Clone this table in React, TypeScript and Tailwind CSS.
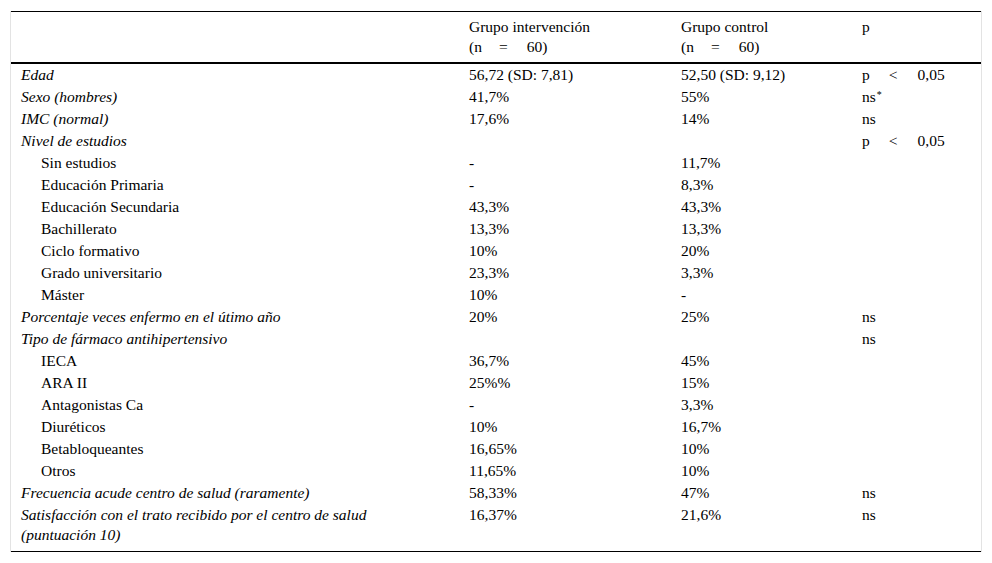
import React from "react";

type Row = { label: string; kind: "cat" | "sub"; a?: string; b?: string; p?: React.ReactNode };

const PLess = () => (
  <span>
    p<span className="ml-[19px]">&lt;</span>
    <span className="ml-[20px]">0,05</span>
  </span>
);

const rows: Row[] = [
  { label: "Edad", kind: "cat", a: "56,72 (SD: 7,81)", b: "52,50 (SD: 9,12)", p: <PLess /> },
  {
    label: "Sexo (hombres)",
    kind: "cat",
    a: "41,7%",
    b: "55%",
    p: (
      <span>
        ns<sup className="text-[10px] relative -top-[4px] ml-[1px]">*</sup>
      </span>
    ),
  },
  { label: "IMC (normal)", kind: "cat", a: "17,6%", b: "14%", p: "ns" },
  { label: "Nivel de estudios", kind: "cat", p: <PLess /> },
  { label: "Sin estudios", kind: "sub", a: "-", b: "11,7%" },
  { label: "Educación Primaria", kind: "sub", a: "-", b: "8,3%" },
  { label: "Educación Secundaria", kind: "sub", a: "43,3%", b: "43,3%" },
  { label: "Bachillerato", kind: "sub", a: "13,3%", b: "13,3%" },
  { label: "Ciclo formativo", kind: "sub", a: "10%", b: "20%" },
  { label: "Grado universitario", kind: "sub", a: "23,3%", b: "3,3%" },
  { label: "Máster", kind: "sub", a: "10%", b: "-" },
  { label: "Porcentaje veces enfermo en el útimo año", kind: "cat", a: "20%", b: "25%", p: "ns" },
  { label: "Tipo de fármaco antihipertensivo", kind: "cat", p: "ns" },
  { label: "IECA", kind: "sub", a: "36,7%", b: "45%" },
  { label: "ARA II", kind: "sub", a: "25%%", b: "15%" },
  { label: "Antagonistas Ca", kind: "sub", a: "-", b: "3,3%" },
  { label: "Diuréticos", kind: "sub", a: "10%", b: "16,7%" },
  { label: "Betabloqueantes", kind: "sub", a: "16,65%", b: "10%" },
  { label: "Otros", kind: "sub", a: "11,65%", b: "10%" },
  { label: "Frecuencia acude centro de salud (raramente)", kind: "cat", a: "58,33%", b: "47%", p: "ns" },
];

export default function App() {
  return (
    <div className="bg-white w-[992px] h-[563px] pt-[11px] pl-[10px] text-[15.5px] leading-[20px] text-black font-['Liberation_Serif','Times_New_Roman',serif]">
      <div className="w-[972px] border-x border-[#e3e3e3]">
        <table className="w-full border-collapse table-fixed">
          <colgroup>
            <col className="w-[448px]" />
            <col className="w-[212px]" />
            <col className="w-[181px]" />
            <col />
          </colgroup>
          <thead>
            <tr className="border-t border-black border-b-2 border-b-black">
              <th className="pl-[10px] pt-[5px] pb-[5px] font-normal text-left align-top"></th>
              <th className="pl-[10px] pt-[5px] pb-[5px] font-normal text-left align-top">
                Grupo intervención
                <br />
                (n<span className="ml-[17px]">=</span>
                <span className="ml-[19px]">60)</span>
              </th>
              <th className="pl-[10px] pt-[5px] pb-[5px] font-normal text-left align-top">
                Grupo control
                <br />
                (n<span className="ml-[17px]">=</span>
                <span className="ml-[19px]">60)</span>
              </th>
              <th className="pl-[10px] pt-[5px] pb-[5px] font-normal text-left align-top">p</th>
            </tr>
          </thead>
          <tbody>
            {rows.map((r, i) => (
              <tr key={i}>
                <td className={`py-[1px] pr-[60px] align-top ${r.kind === "cat" ? "pl-[10px] italic" : "pl-[30px]"}`}>
                  {r.label}
                </td>
                <td className="pl-[10px] py-[1px] align-top">{r.a}</td>
                <td className="pl-[10px] py-[1px] align-top">{r.b}</td>
                <td className="pl-[10px] py-[1px] align-top">{r.p}</td>
              </tr>
            ))}
            <tr className="border-b border-black">
              <td className="pl-[10px] pr-[60px] pt-[1px] pb-[6px] align-top italic">
                Satisfacción con el trato recibido por el centro de salud (puntuación 10)
              </td>
              <td className="pl-[10px] pt-[1px] pb-[6px] align-top">16,37%</td>
              <td className="pl-[10px] pt-[1px] pb-[6px] align-top">21,6%</td>
              <td className="pl-[10px] pt-[1px] pb-[6px] align-top">ns</td>
            </tr>
          </tbody>
        </table>
      </div>
    </div>
  );
}
